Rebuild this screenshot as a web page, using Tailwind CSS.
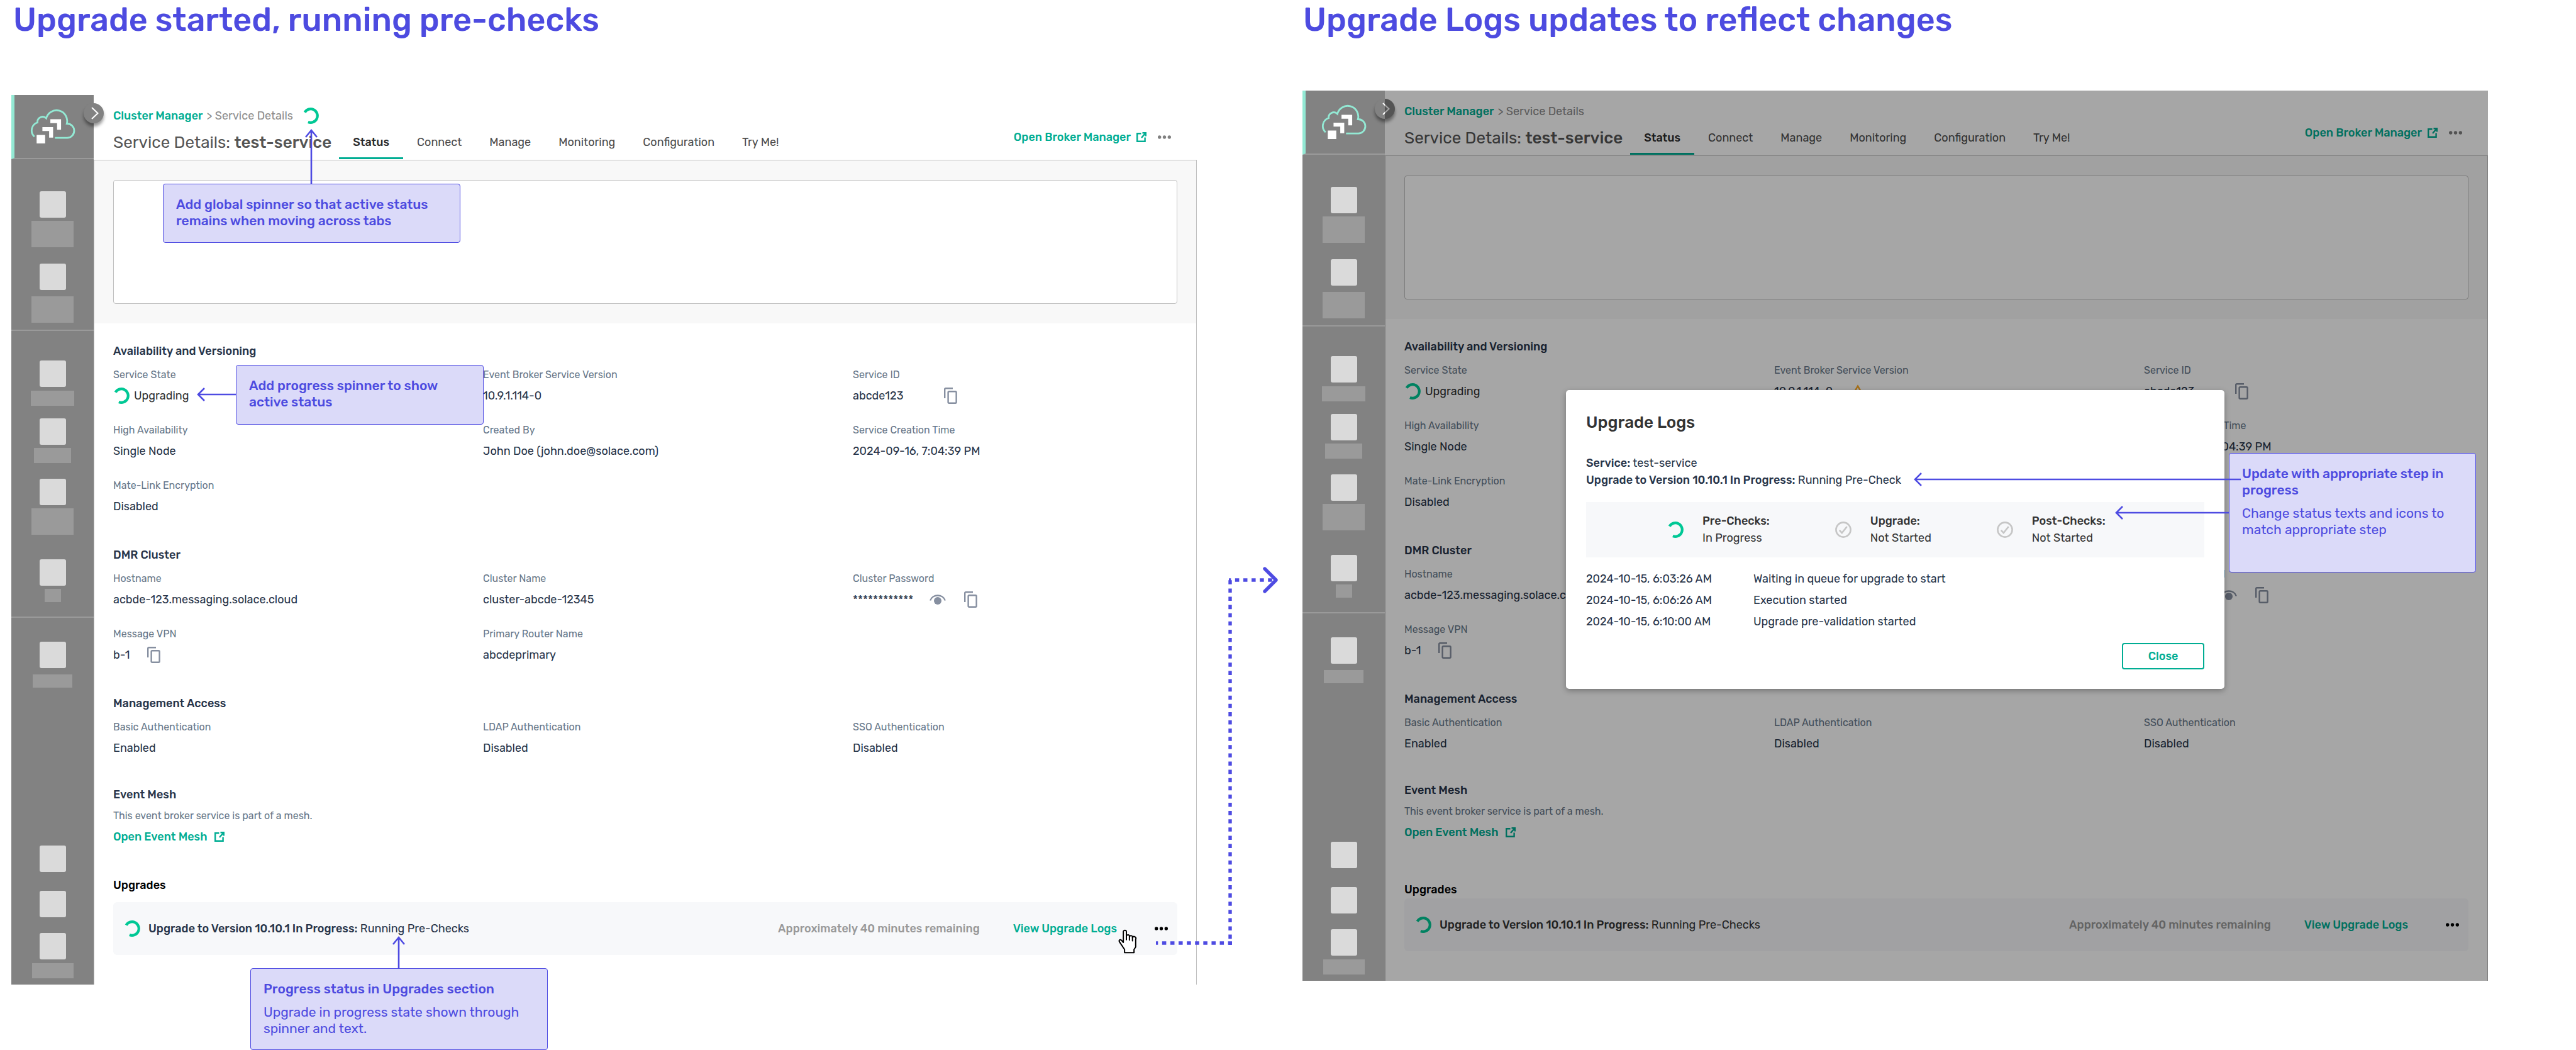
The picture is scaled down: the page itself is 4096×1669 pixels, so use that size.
<!DOCTYPE html>
<html lang="en">
<head>
<meta charset="utf-8">
<meta name="viewport" content="width=device-width, initial-scale=1">
<title>Upgrade flow</title>
<script src="https://cdn.jsdelivr.net/npm/@tailwindcss/browser@4"></script>
</head>
<body class="bg-white font-[Rubik,Inter,sans-serif] text-[18px] leading-6 text-[#273449]">

<!-- Shared icons -->
<svg class="hidden" aria-hidden="true">
  <symbol id="i-spinner" viewBox="0 0 26 26"><path d="M3.6 7.6A10.8 10.8 0 1 1 8.9 23" fill="none" stroke="currentColor" stroke-width="4.2"/></symbol>
  <symbol id="i-copy" viewBox="0 0 21 26"><g fill="none" stroke="currentColor" stroke-width="2.4"><path d="M1.2 17V2.7a1.5 1.5 0 0 1 1.5-1.5H14"/><rect x="6.6" y="6.2" width="13" height="18.6" rx="1.5"/></g></symbol>
  <symbol id="i-eye" viewBox="0 0 26 16"><path d="M1.2 9.5C4.5-1.2 21.5-1.2 24.8 9.5" fill="none" stroke="currentColor" stroke-width="2.4"/><circle cx="13" cy="10" r="6" fill="currentColor"/></symbol>
  <symbol id="i-open" viewBox="0 0 16 16"><g fill="none" stroke="currentColor" stroke-width="2.4"><path d="M7.5 2.2H1.2V14.8H13.6V8.5"/><path d="M9.5 1.2H14.8V6.5"/><path d="M14.4 1.6L8 9"/></g></symbol>
  <symbol id="i-dots" viewBox="0 0 21 6"><g fill="currentColor"><circle cx="2.7" cy="3" r="2.7"/><circle cx="10.5" cy="3" r="2.7"/><circle cx="18.3" cy="3" r="2.7"/></g></symbol>
  <symbol id="i-check" viewBox="0 0 26 26"><g fill="none" stroke="currentColor" stroke-width="2.6"><circle cx="13" cy="13" r="11.6"/><path d="M6.8 13.8l4 4.2 8-10"/></g></symbol>
  <symbol id="i-warn" viewBox="0 0 26 23"><path d="M13 2.6L24 21.6H2z" fill="none" stroke="currentColor" stroke-width="2.4"/><path d="M13 9.5v5.5M13 17v2.4" stroke="currentColor" stroke-width="2.2"/></symbol>
</svg>

<!-- Service details screen, used before and after -->
<template id="screen">
  <div class="flex">
    <aside class="relative flex w-[131px] shrink-0 flex-col items-center bg-[#828282]">
      <div class="flex h-[102px] w-full items-start border-b-2 border-l-5 border-b-[#9a9a9a] border-l-[#93e9d4] pt-[22px] pl-[25px]">
        <svg class="h-[57px] w-[72px]" viewBox="0 0 330 260" fill="none">
          <path d="M31 202A58 60 0 0 1 53 99A38 38 0 0 1 117 68A77 77 0 0 1 267 107A52 52 0 0 1 270 211H180" stroke="#93e9d4" stroke-width="13"/>
          <path d="M47 190h62v61h-62zM89 132h78v77h-29v-48h-49zM147 75h78v77h-29v-48h-49z" fill="#fff"/>
        </svg>
      </div>
      <div class="mt-[51px] h-[42px] w-[42px] rounded-[3px] bg-[#dadada]"></div>
      <div class="mt-[5px] h-[42px] w-[67px] bg-[#9a9a9a]"></div>
      <div class="mt-[26px] h-[42px] w-[42px] rounded-[3px] bg-[#dadada]"></div>
      <div class="mt-[10px] h-[42px] w-[67px] bg-[#9a9a9a]"></div>
      <div class="mt-[11px] h-[2px] w-full bg-[#9a9a9a]"></div>
      <div class="mt-[47px] h-[42px] w-[42px] rounded-[3px] bg-[#dadada]"></div>
      <div class="mt-[6px] h-[24px] w-[69px] bg-[#9a9a9a]"></div>
      <div class="mt-[20px] h-[42px] w-[42px] rounded-[3px] bg-[#dadada]"></div>
      <div class="mt-[5px] h-[24px] w-[59px] bg-[#9a9a9a]"></div>
      <div class="mt-[25px] h-[42px] w-[42px] rounded-[3px] bg-[#dadada]"></div>
      <div class="mt-[5px] h-[42px] w-[67px] bg-[#9a9a9a]"></div>
      <div class="mt-[39px] h-[42px] w-[42px] rounded-[3px] bg-[#dadada]"></div>
      <div class="mt-[5px] h-[21px] w-[26px] bg-[#9a9a9a]"></div>
      <div class="mt-[23px] h-[2px] w-full bg-[#9a9a9a]"></div>
      <div class="mt-[38px] h-[42px] w-[42px] rounded-[3px] bg-[#dadada]"></div>
      <div class="mt-[10px] h-[21px] w-[63px] bg-[#9a9a9a]"></div>
      <div class="mt-auto h-[42px] w-[42px] rounded-[3px] bg-[#dadada]"></div>
      <div class="mt-[30px] h-[42px] w-[42px] rounded-[3px] bg-[#dadada]"></div>
      <div class="mt-[25px] h-[42px] w-[42px] rounded-[3px] bg-[#dadada]"></div>
      <div class="mt-[6px] mb-[10px] h-[24px] w-[66px] bg-[#9a9a9a]"></div>
      <button aria-label="Expand navigation" class="absolute top-[13px] -right-[16px] z-10 flex h-[32px] w-[32px] items-center justify-center rounded-full bg-[#828282] shadow-[0_5px_5px_rgba(0,0,0,0.4)]">
        <svg class="ml-[4px] h-[20px] w-[12px]" viewBox="0 0 12 20" fill="none"><path d="M1 1l9.5 9L1 19" stroke="#fff" stroke-width="2"/></svg>
      </button>
    </aside>

    <div class="min-w-0 flex-1">
      <header class="flex h-[104px] justify-between border-b border-[#c0c0c0] pr-[41px] pl-[31px]">
        <div>
          <div class="mt-[21px] flex h-6 items-center">
            <a href="#" class="font-medium text-[#00ad93]">Cluster Manager</a>
            <span class="ml-[6px] text-[#8c8c8c]">&gt; Service Details</span>
            <svg class="ml-[15px] h-[26px] w-[26px] text-[#00c895] group-data-[step=logs]:hidden"><use href="#i-spinner"/></svg>
          </div>
          <div class="flex">
            <h2 class="mt-[15px] text-[26px] leading-8 whitespace-nowrap text-[#555]">Service Details: <span class="font-medium">test-service</span></h2>
            <nav class="ml-[12px] flex text-[#4d4d4d]">
              <a href="#" class="border-b-3 border-[#00ad93] px-[22px] pt-[18px] pb-[12px] font-medium text-[#2b2b2b]">Status</a>
              <a href="#" class="px-[22px] pt-[18px]">Connect</a>
              <a href="#" class="px-[22px] pt-[18px]">Manage</a>
              <a href="#" class="px-[22px] pt-[18px]">Monitoring</a>
              <a href="#" class="px-[22px] pt-[18px]">Configuration</a>
              <a href="#" class="px-[22px] pt-[18px] whitespace-nowrap">Try Me!</a>
            </nav>
          </div>
        </div>
        <div class="mt-[55px] flex h-6 items-center">
          <a href="#" class="flex items-center gap-[9px] font-medium text-[#00ad93]">Open Broker Manager <svg class="h-[16px] w-[16px]"><use href="#i-open"/></svg></a>
          <button aria-label="More actions" class="ml-[18px] text-[#808080]"><svg class="h-[6px] w-[21px]"><use href="#i-dots"/></svg></button>
        </div>
      </header>

      <div class="border-x border-[#c0c0c0] pb-[47px]">
        <div class="bg-[#f8f8f8] px-[30px] py-[31px]">
          <div class="h-[197px] rounded-[4px] border border-[#c0c0c0] bg-white"></div>
        </div>

        <div class="px-[30px] pt-[32px]">
          <h3 class="font-medium">Availability and Versioning</h3>
          <dl class="mt-[15px] grid grid-cols-[588fr_588fr_516fr] gap-y-[32px]">
            <div class="grid gap-[10px]"><dt class="text-[16px] leading-[22px] text-[#68788a]">Service State</dt><dd class="flex h-6 items-center gap-[7px] text-[#333]"><svg class="h-[26px] w-[26px] text-[#00c895]"><use href="#i-spinner"/></svg>Upgrading</dd></div>
            <div class="grid gap-[10px]"><dt class="text-[16px] leading-[22px] text-[#68788a]">Event Broker Service Version</dt><dd class="flex h-6 items-center gap-[27px]">10.9.1.114-0<svg class="hidden h-[23px] w-[26px] text-[#ffaa20] group-data-[step=logs]:block"><use href="#i-warn"/></svg></dd></div>
            <div class="grid gap-[10px]"><dt class="text-[16px] leading-[22px] text-[#68788a]">Service ID</dt><dd class="flex h-6 items-center gap-[65px]">abcde123<button aria-label="Copy service ID" class="text-[#868fa0]"><svg class="h-[26px] w-[21px]"><use href="#i-copy"/></svg></button></dd></div>
            <div class="grid gap-[10px]"><dt class="text-[16px] leading-[22px] text-[#68788a]">High Availability</dt><dd>Single Node</dd></div>
            <div class="grid gap-[10px]"><dt class="text-[16px] leading-[22px] text-[#68788a]">Created By</dt><dd>John Doe (john.doe@solace.com)</dd></div>
            <div class="grid gap-[10px]"><dt class="text-[16px] leading-[22px] text-[#68788a]">Service Creation Time</dt><dd>2024-09-16, 7:04:39 PM</dd></div>
            <div class="grid gap-[10px]"><dt class="text-[16px] leading-[22px] text-[#68788a]">Mate-Link Encryption</dt><dd>Disabled</dd></div>
          </dl>

          <h3 class="mt-[53px] font-medium">DMR Cluster</h3>
          <dl class="mt-[15px] grid grid-cols-[588fr_588fr_516fr] gap-y-[32px]">
            <div class="grid gap-[10px]"><dt class="text-[16px] leading-[22px] text-[#68788a]">Hostname</dt><dd>acbde-123.messaging.solace.cloud</dd></div>
            <div class="grid gap-[10px]"><dt class="text-[16px] leading-[22px] text-[#68788a]">Cluster Name</dt><dd>cluster-abcde-12345</dd></div>
            <div class="grid gap-[10px]"><dt class="text-[16px] leading-[22px] text-[#68788a]">Cluster Password</dt><dd class="flex h-6 items-center">************<button aria-label="Show password" class="ml-[26px] text-[#868fa0]"><svg class="h-[16px] w-[26px]"><use href="#i-eye"/></svg></button><button aria-label="Copy password" class="ml-[29px] text-[#868fa0]"><svg class="h-[26px] w-[21px]"><use href="#i-copy"/></svg></button></dd></div>
            <div class="grid gap-[10px]"><dt class="text-[16px] leading-[22px] text-[#68788a]">Message VPN</dt><dd class="flex h-6 items-center gap-[28px]">b-1<button aria-label="Copy message VPN" class="text-[#868fa0]"><svg class="h-[26px] w-[21px]"><use href="#i-copy"/></svg></button></dd></div>
            <div class="grid gap-[10px]"><dt class="text-[16px] leading-[22px] text-[#68788a]">Primary Router Name</dt><dd>abcdeprimary</dd></div>
          </dl>

          <h3 class="mt-[53px] font-medium">Management Access</h3>
          <dl class="mt-[15px] grid grid-cols-[588fr_588fr_516fr] gap-y-[32px]">
            <div class="grid gap-[10px]"><dt class="text-[16px] leading-[22px] text-[#68788a]">Basic Authentication</dt><dd>Enabled</dd></div>
            <div class="grid gap-[10px]"><dt class="text-[16px] leading-[22px] text-[#68788a]">LDAP Authentication</dt><dd>Disabled</dd></div>
            <div class="grid gap-[10px]"><dt class="text-[16px] leading-[22px] text-[#68788a]">SSO Authentication</dt><dd>Disabled</dd></div>
          </dl>

          <h3 class="mt-[50px] font-medium">Event Mesh</h3>
          <p class="mt-[11px] text-[16px] leading-[22px] text-[#68788a]">This event broker service is part of a mesh.</p>
          <a href="#" class="mt-[10px] flex items-center gap-[11px] font-medium text-[#00ad93]">Open Event Mesh <svg class="h-[16px] w-[16px]"><use href="#i-open"/></svg></a>

          <h3 class="mt-[53px] font-medium text-black group-data-[step=logs]:mt-[67px]">Upgrades</h3>
          <div class="mt-[15px] flex h-[84px] items-center rounded-[6px] bg-[#f7f8fa] pr-[15px] pl-[17px] group-data-[step=logs]:mt-[2px] group-data-[step=logs]:text-[#333]">
            <svg class="h-[26px] w-[26px] text-[#00c895]"><use href="#i-spinner"/></svg>
            <p class="ml-[13px]"><span class="font-medium">Upgrade to Version 10.10.1 In Progress:</span> Running Pre-Checks</p>
            <span class="ml-auto font-medium text-[#999]">Approximately 40 minutes remaining</span>
            <a href="#" class="ml-[53px] font-medium text-[#00ad93]">View Upgrade Logs</a>
            <button aria-label="More upgrade actions" class="ml-[60px] text-black"><svg class="h-[6px] w-[21px]"><use href="#i-dots"/></svg></button>
          </div>
        </div>
      </div>
    </div>
  </div>
</template>

<main class="grid min-h-screen grid-cols-2 gap-[168px] pr-[140px] pl-[18px]">
  <section>
    <h1 class="pl-[3px] text-[52px] leading-[62px] font-medium text-[#4d4be0]">Upgrade started, running pre-checks</h1>
    <div class="group relative mt-[89px]" data-step="start">
      <div data-mount="screen"></div>

      <div class="absolute top-[141px] left-[241px] h-[94px] w-[473px] rounded-[4px] border border-[#4e4be2] bg-[#dbdaf9] px-[20px] pt-[19px] text-[21px] leading-[26px] font-medium text-[#4d4be0]">Add global spinner so that active status<br>remains when moving across tabs</div>
      <div class="absolute top-[429px] left-[357px] h-[95px] w-[394px] rounded-[4px] border border-[#4e4be2] bg-[#dbdaf9] px-[20px] pt-[19px] text-[21px] leading-[26px] font-medium text-[#4d4be0]">Add progress spinner to show<br>active status</div>
      <div class="absolute top-[1388px] left-[380px] h-[130px] w-[473px] rounded-[4px] border border-[#4e4be2] bg-[#dbdaf9] px-[20px] pt-[19px] text-[21px] leading-[26px] text-[#4d4be0]">
        <p class="font-medium">Progress status in Upgrades section</p>
        <p class="mt-[11px]">Upgrade in progress state shown through<br>spinner and text.</p>
      </div>

      <svg class="pointer-events-none absolute inset-0 h-full w-full overflow-visible" fill="none" stroke="#4e4be2" stroke-width="2.6" aria-hidden="true">
        <path d="M477 141V56M468 67l9-11 9 11"/>
        <path d="M357 476H297M307 466l-10 10 10 10"/>
        <path d="M616 1388V1340M607 1350l9-11 9 11"/>
        <g stroke-width="5.4" stroke-dasharray="6.55 6.55" stroke-dashoffset="3.27">
          <path d="M1820 1348H1941"/>
          <path d="M1938 1351V769"/>
          <path d="M1936 771H2008"/>
        </g>
        <path d="M1993 753l18 18-18 18" stroke-width="5.4" stroke-linecap="round" stroke-linejoin="round"/>
      </svg>
      <svg class="pointer-events-none absolute top-[1326px] left-[1760px] h-[39px] w-[30px]" viewBox="0 0 136 176" fill="#fff" stroke="#000" stroke-width="9" stroke-linejoin="round" stroke-linecap="round" aria-hidden="true">
        <path d="M37 95V18A11 11 0 0 1 59 18V48A11 10 0 0 1 81 53A11 10 0 0 1 103 60A12 12 0 0 1 126 72V128L114 146V168H46V146L10 92C2 80 14 68 24 80Z"/>
        <path d="M59 48V76M81 53V78M103 60V84"/>
      </svg>
    </div>
  </section>

  <section>
    <h1 class="pl-px text-[52px] leading-[62px] font-medium text-[#4d4be0]">Upgrade Logs updates to reflect changes</h1>
    <div class="group relative mt-[82px]" data-step="logs">
      <div data-mount="screen"></div>
      <div class="absolute inset-y-0 right-0 left-[131px] z-20 bg-black/35"></div>

      <div role="dialog" aria-labelledby="logs-title" class="absolute inset-x-0 top-[476px] z-30 mx-auto w-[1047px] rounded-[5px] bg-white px-[32px] pt-[36px] pb-[31px] shadow-[0_3px_10px_rgba(0,0,0,0.3)]">
        <h2 id="logs-title" class="text-[26px] leading-8 font-medium text-[#333]">Upgrade Logs</h2>
        <p class="mt-[35px] leading-[27px]"><span class="font-medium">Service:</span> test-service</p>
        <p class="leading-[27px]"><span class="font-medium">Upgrade to Version 10.10.1 In Progress:</span> Running Pre-Check</p>
        <div class="mt-[21px] flex h-[88px] items-center gap-[104px] bg-[#f7f8fa] pl-[129px] leading-[27px] text-[#333]">
          <div class="flex items-center gap-[30px]"><svg class="h-[26px] w-[26px] text-[#00c895]"><use href="#i-spinner"/></svg><p><span class="font-medium">Pre-Checks:</span><br>In Progress</p></div>
          <div class="flex items-center gap-[30px]"><svg class="h-[26px] w-[26px] text-[#c6c6c6]"><use href="#i-check"/></svg><p><span class="font-medium">Upgrade:</span><br>Not Started</p></div>
          <div class="flex items-center gap-[30px]"><svg class="h-[26px] w-[26px] text-[#c6c6c6]"><use href="#i-check"/></svg><p><span class="font-medium">Post-Checks:</span><br>Not Started</p></div>
        </div>
        <table class="mt-[17px] w-full text-left leading-[34px]">
          <tbody>
            <tr><td class="w-[266px]">2024-10-15, 6:03:26 AM</td><td>Waiting in queue for upgrade to start</td></tr>
            <tr><td>2024-10-15, 6:06:26 AM</td><td>Execution started</td></tr>
            <tr><td>2024-10-15, 6:10:00 AM</td><td>Upgrade pre-validation started</td></tr>
          </tbody>
        </table>
        <div class="mt-[17px] flex justify-end">
          <button class="h-[42px] w-[131px] rounded-[4px] border-2 border-[#00ad93] font-medium text-[#00ad93]">Close</button>
        </div>
      </div>

      <div class="absolute top-[576px] left-[1473px] z-30 h-[190px] w-[393px] rounded-[4px] border border-[#4e4be2] bg-[#dbdaf9] px-[20px] pt-[19px] text-[21px] leading-[26px] text-[#4d4be0]">
        <p class="font-medium">Update with appropriate step in<br>progress</p>
        <p class="mt-[11px]">Change status texts and icons to<br>match appropriate step</p>
      </div>
      <svg class="pointer-events-none absolute inset-0 z-40 h-full w-full overflow-visible" fill="none" stroke="#4e4be2" stroke-width="2.6" aria-hidden="true">
        <path d="M1492 618H974M984 608l-10 10 10 10"/>
        <path d="M1473 671H1294M1304 661l-10 10 10 10"/>
      </svg>
    </div>
  </section>
</main>

<script>
  const screenTemplate = document.getElementById('screen');
  document.querySelectorAll('[data-mount="screen"]').forEach(el => el.replaceWith(screenTemplate.content.cloneNode(true)));
</script>
</body>
</html>
